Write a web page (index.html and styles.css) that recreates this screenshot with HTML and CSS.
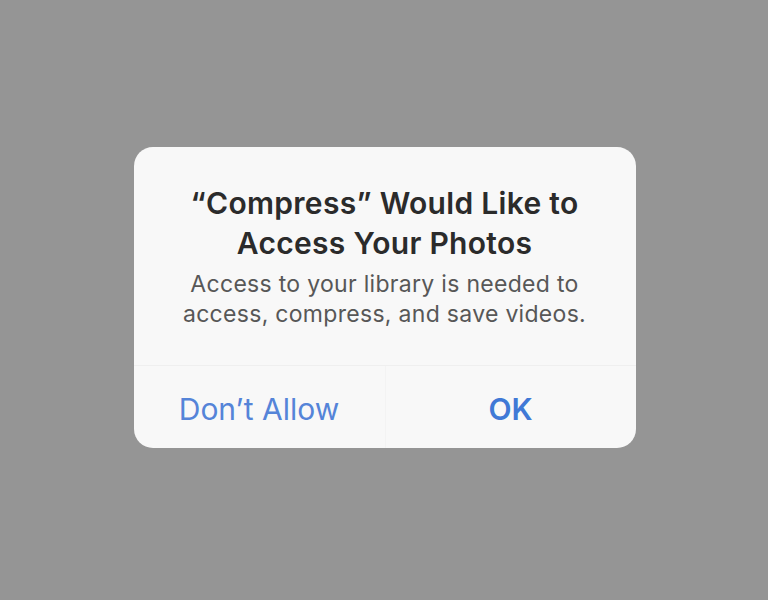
FILE: index.html
```html
<!DOCTYPE html>
<html>
<head>
<meta charset="utf-8">
<link rel="stylesheet" href="styles.css">
</head>
<body>
<div class="screen">
  <div class="alert">
    <div class="alert-body">
      <h1 class="alert-title">“Compress” Would Like to<br>Access Your Photos</h1>
      <p class="alert-message">Access to your library is needed to<br>access, compress, and save videos.</p>
    </div>
    <div class="alert-actions">
      <button class="alert-btn">Don’t Allow</button>
      <button class="alert-btn alert-btn-primary">OK</button>
    </div>
  </div>
</div>
</body>
</html>
```
FILE: styles.css
```css
html, body {
  margin: 0;
  padding: 0;
  height: 100%;
}
body {
  background: #959595;
  font-family: Inter, "Open Sans", "Liberation Sans", sans-serif;
}
.screen {
  display: flex;
  justify-content: center;
  padding-top: 147px;
  padding-left: 1px;
}
.alert {
  width: 502px;
  background: #f8f8f8;
  border-radius: 19px;
  overflow: hidden;
}
.alert-body {
  padding: 36px 10px 36px;
  text-align: center;
}
.alert-title {
  margin: 0;
  font-size: 30px;
  line-height: 40px;
  font-weight: 600;
  color: #2b2b2b;
  letter-spacing: 0.3px;
}
.alert-message {
  margin: 6px 0 0;
  font-size: 23px;
  line-height: 30px;
  color: #575757;
  font-weight: 400;
  letter-spacing: 0.3px;
}
.alert-actions {
  display: grid;
  grid-template-columns: 1fr 1fr;
  border-top: 1px solid #efefef;
  height: 82px;
}
.alert-btn {
  border: 0;
  background: transparent;
  font-family: inherit;
  font-size: 30px;
  color: #5584d8;
  padding: 4px 0 0;
  margin: 0;
}
.alert-btn + .alert-btn {
  border-left: 1px solid #f3f3f3;
}
.alert-btn-primary {
  font-weight: 600;
  color: #4079d6;
}
```
